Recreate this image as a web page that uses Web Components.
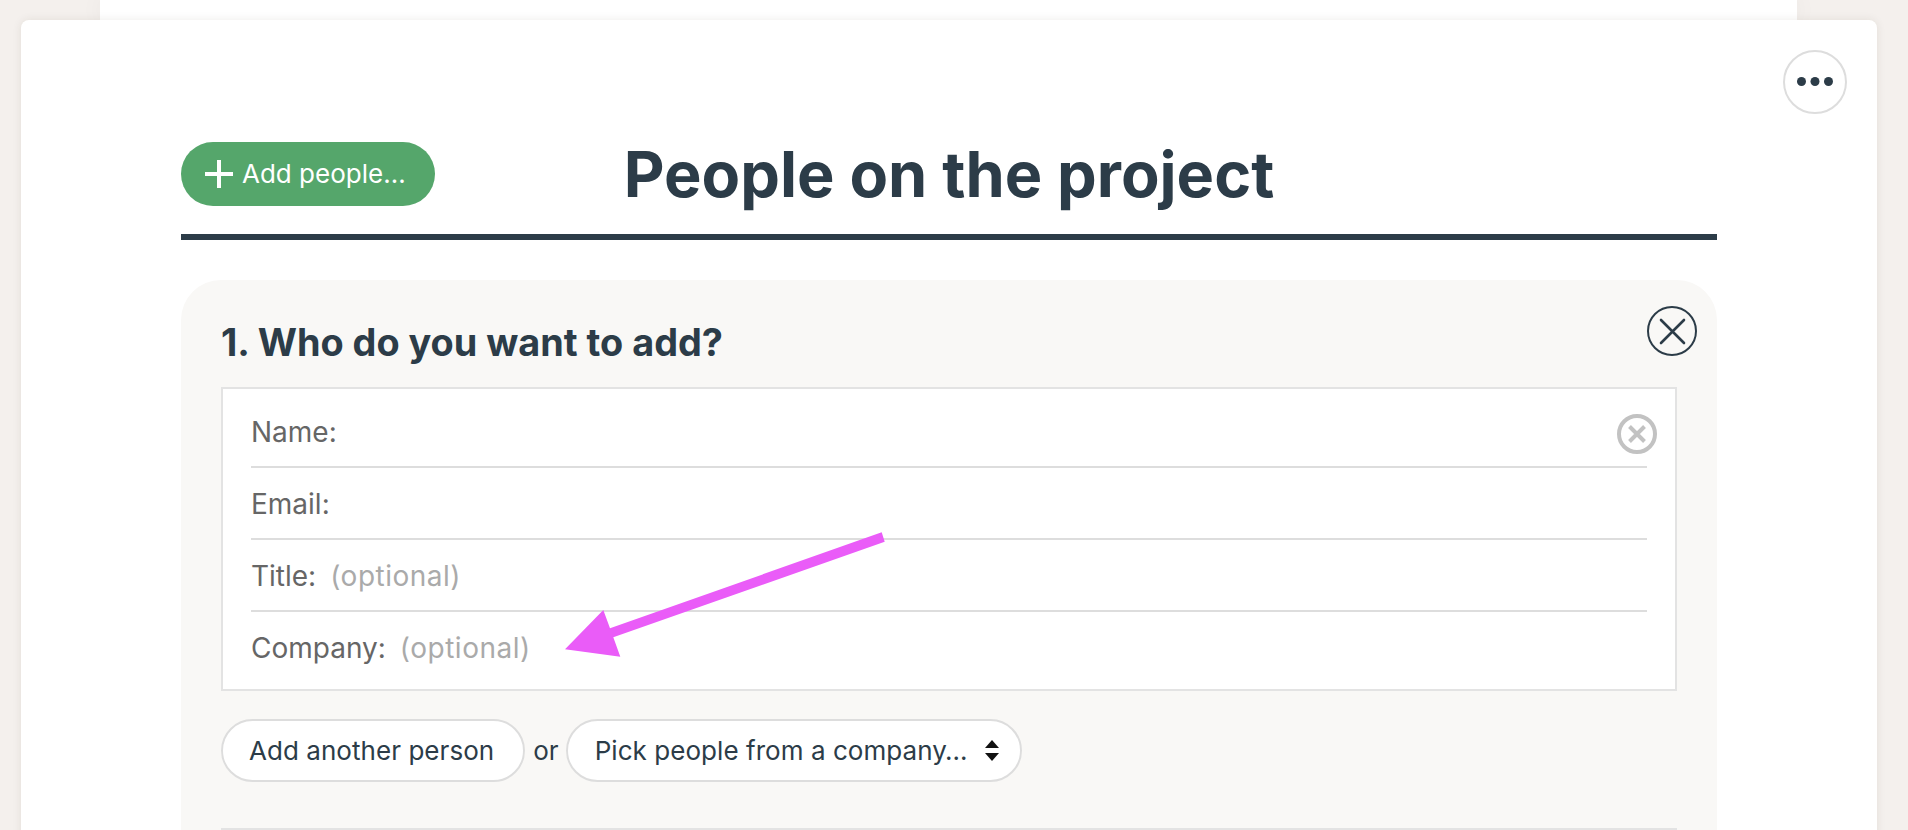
<!DOCTYPE html>
<html lang="en"><head><meta charset="utf-8"><title>People on the project</title>
<style>
html,body{margin:0;height:830px;overflow:hidden;background:#f4f0ed;font-family:Inter,"Liberation Sans",sans-serif}
</style></head><body>
<template id="t-page"><style>
:host{display:block;height:830px;overflow:hidden;position:relative}
.back{width:1697px;height:20px;margin-left:100px;background:#fff;box-shadow:0 0 24px rgba(60,40,20,.05)}
</style><div class="back"></div><slot></slot></template>

<template id="t-card"><style>
:host{display:block;position:relative;width:1856px;margin-left:21px;height:900px;box-sizing:border-box;padding:122px 160px 0;background:#fff;border-radius:8px 8px 0 0;box-shadow:0 0 10px rgba(60,40,20,.09)}
.menu{position:absolute;top:30px;right:30px}
</style><div class="menu"><slot name="menu"></slot></div><slot></slot></template>

<template id="t-header"><style>
:host{display:grid;grid-template-columns:1fr auto 1fr;align-items:start;height:92px;border-bottom:6px solid #2c3c48}
h1{margin:0;font:700 63px/64px Inter,"Liberation Sans",sans-serif;color:#2c3c48;white-space:nowrap}
.l{justify-self:start}
</style><div class="l"><slot name="action"></slot></div><h1><slot></slot></h1><div></div></template>

<template id="t-add"><style>
:host{display:flex;align-items:center;box-sizing:border-box;width:254px;height:64px;padding-left:24px;gap:9px;border-radius:32px;background:#55a66b;color:#fff;font:400 26px/1 Inter,"Liberation Sans",sans-serif;white-space:nowrap}
svg{width:28px;height:28px;flex:none}
</style><svg viewBox="0 0 28 28"><path d="M14 0v28M0 14h28" stroke="#fff" stroke-width="4" fill="none"/></svg><span><slot></slot></span></template>

<template id="t-menu"><style>
:host{display:block;box-sizing:border-box;width:64px;height:64px;border:2px solid #ddd;border-radius:50%;background:#fff}
svg{display:block;width:60px;height:60px}
</style><svg viewBox="0 0 60 60"><g fill="#2c3c48"><circle cx="16.5" cy="29.5" r="4.5"/><circle cx="30" cy="29.5" r="4.5"/><circle cx="43.5" cy="29.5" r="4.5"/></g></svg></template>

<template id="t-panel"><style>
:host{display:block;position:relative;margin-top:40px;padding:39px 40px 0;height:600px;background:#f9f8f6;border-radius:40px 40px 0 0}
h2{margin:0 0 22px;font:700 37.8px/46px Inter,"Liberation Sans",sans-serif;color:#2c3c48;white-space:nowrap}
.close{position:absolute;top:26px;right:20px;width:50px;height:50px}
svg{display:block;width:50px;height:50px}
</style><h2><slot name="title"></slot></h2>
<div class="close"><svg viewBox="0 0 50 50" fill="none" stroke="#2c3c48"><circle cx="25" cy="25" r="24" stroke-width="2"/><path d="M14 14l23 23M37 14L14 37" stroke-width="2.6" stroke-linecap="round"/></svg></div>
<slot></slot></template>

<template id="t-box"><style>
:host{display:block;box-sizing:border-box;height:304px;padding:7px 28px 4px;background:#fff;border:2px solid #e3e3e3}
</style><slot></slot></template>

<template id="t-row"><style>
:host{display:flex;align-items:center;position:relative;box-sizing:border-box;height:72px;padding-top:1px;border-bottom:2px solid #ddd;color:#666;font:400 28px/1 Inter,"Liberation Sans",sans-serif;white-space:nowrap}
:host([last]){border-bottom:0;padding-bottom:2px}
.o{color:#aaa;padding-left:14px;letter-spacing:.5px}
.x{position:absolute;top:18px;right:-10px}
</style><span><slot></slot></span><span class="o"><slot name="opt"></slot></span><div class="x"><slot name="x"></slot></div></template>

<template id="t-clear"><style>
:host{display:block;width:40px;height:40px}
svg{display:block;width:40px;height:40px}
</style><svg viewBox="0 0 40 40" fill="none" stroke="#c2c2c2" stroke-width="4"><circle cx="20" cy="20" r="18"/><path d="M12.5 12.5l15 15M27.500 12.5l-15 15"/></svg></template>

<template id="t-actions"><style>
:host{display:flex;align-items:center;margin-top:28px;height:63px;color:#2c3c48;font:400 26px/1 Inter,"Liberation Sans",sans-serif;letter-spacing:.05px;white-space:nowrap}
.or{margin:0 7px 0 8px}
</style><slot name="a"></slot><span class="or"><slot></slot></span><slot name="b"></slot></template>

<template id="t-pill"><style>
:host{display:flex;align-items:center;box-sizing:border-box;height:63px;padding:0 29px 0 26px;background:#fff;border:2px solid #ddd;border-radius:32px;white-space:nowrap}
:host([wide]){padding:0 21px 0 27px}
svg{display:none;width:14px;height:21px;margin-left:18px;flex:none}
:host([wide]) svg{display:block}
</style><slot></slot><svg viewBox="0 0 14 21"><path d="M7 0l7 8H0zM7 21L0 13h14z" fill="#111"/></svg></template>

<template id="t-divider"><style>
:host{display:block;height:2px;margin-top:46px;background:#e3e3e3}
</style></template>

<template id="t-arrow"><style>
:host{position:absolute;left:0;top:0;width:1908px;height:830px;pointer-events:none}
svg{display:block;width:1908px;height:830px}
</style><svg viewBox="0 0 1908 830"><polygon fill="#ea5cf8" points="881.700,532.300 884.700,541.700 613.300,637.300 620.300,656.700 565,649.300 603.300,610 610,628.300"/></svg></template>

<script>
for (const [name, id] of [['app-page','t-page'],['app-card','t-card'],['app-header','t-header'],['add-button','t-add'],['menu-button','t-menu'],['form-panel','t-panel'],['field-box','t-box'],['field-row','t-row'],['clear-icon','t-clear'],['form-actions','t-actions'],['pill-button','t-pill'],['form-divider','t-divider'],['annotation-arrow','t-arrow']]) {
  customElements.define(name, class extends HTMLElement {
    constructor(){ super(); this.attachShadow({mode:'open'}).appendChild(document.getElementById(id).content.cloneNode(true)); }
  });
}
</script>

<app-page>
  <app-card>
    <menu-button slot="menu"></menu-button>
    <app-header>
      <add-button slot="action">Add people…</add-button>
      People on the project
    </app-header>
    <form-panel>
      <span slot="title">1. Who do you want to add?</span>
      <field-box>
        <field-row>Name:<clear-icon slot="x"></clear-icon></field-row>
        <field-row>Email:</field-row>
        <field-row>Title:<span slot="opt">(optional)</span></field-row>
        <field-row last>Company:<span slot="opt">(optional)</span></field-row>
      </field-box>
      <form-actions>
        <pill-button slot="a">Add another person</pill-button>or<pill-button slot="b" wide>Pick people from a company…</pill-button>
      </form-actions>
      <form-divider></form-divider>
    </form-panel>
  </app-card>
  <annotation-arrow></annotation-arrow>
</app-page>
</body></html>
